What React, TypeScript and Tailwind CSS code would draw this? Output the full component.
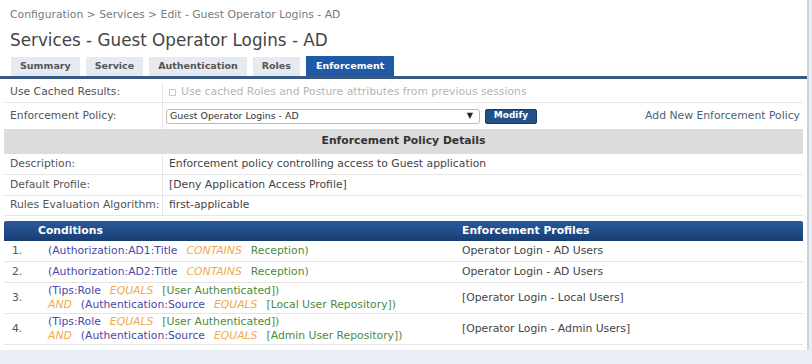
import React from "react";

const font = { fontFamily: '"DejaVu Sans", Verdana, sans-serif' };

const tabs = ["Summary", "Service", "Authentication", "Roles", "Enforcement"];

type Part = { t: string; k: "a" | "o" | "v" };

const A = (t: string): Part => ({ t, k: "a" });
const O = (t: string): Part => ({ t, k: "o" });
const V = (t: string): Part => ({ t, k: "v" });

const rules: { n: string; lines: Part[][]; profile: string }[] = [
  {
    n: "1.",
    lines: [[A("(Authorization:AD1:Title"), O("CONTAINS"), V("Reception)")]],
    profile: "Operator Login - AD Users",
  },
  {
    n: "2.",
    lines: [[A("(Authorization:AD2:Title"), O("CONTAINS"), V("Reception)")]],
    profile: "Operator Login - AD Users",
  },
  {
    n: "3.",
    lines: [
      [A("(Tips:Role"), O("EQUALS"), V("[User Authenticated])")],
      [O("AND"), A("(Authentication:Source"), O("EQUALS"), V("[Local User Repository])")],
    ],
    profile: "[Operator Login - Local Users]",
  },
  {
    n: "4.",
    lines: [
      [A("(Tips:Role"), O("EQUALS"), V("[User Authenticated])")],
      [O("AND"), A("(Authentication:Source"), O("EQUALS"), V("[Admin User Repository])")],
    ],
    profile: "[Operator Login - Admin Users]",
  },
];

function Token({ p }: { p: Part }) {
  if (p.k === "o") return <span className="italic text-[#f0a94a] mr-[9px]">{p.t}</span>;
  if (p.k === "v") return <span className="text-[#4c8a3c] mr-[9px]">{p.t}</span>;
  return <span className="text-[#4a47a8] mr-[9px]">{p.t}</span>;
}

function DetailRow({ label, children, h }: { label: string; children: React.ReactNode; h: string }) {
  return (
    <div className={`flex items-center border-b border-[#e6e6e6] ${h}`}>
      <div className="w-[159px] pl-[6px] text-[#555] border-r border-[#e6e6e6] h-full flex items-center whitespace-nowrap">
        {label}
      </div>
      <div className="pl-[6px] flex-1 flex items-center text-[#444]">{children}</div>
    </div>
  );
}

export default function App() {
  return (
    <div className="w-[812px] h-[364px] bg-[#e9eef4] overflow-hidden text-[10.8px]" style={font}>
      <div className="w-[809px] h-[350px] bg-white border-r-2 border-[#c9d3de] pt-[8px]">
        <div className="pl-[10px] text-[#7a7a7a] leading-[14px]">
          Configuration &gt; Services &gt; Edit - Guest Operator Logins - AD
        </div>
        <div className="pl-[10px] mt-[8px] text-[16.8px] text-[#444] leading-[20px]">
          Services - Guest Operator Logins - AD
        </div>

        <div className="flex items-end gap-[6px] pl-[11px] mt-[10px] h-[19px] border-b-[3px] border-[#3a5a86] text-[9.5px]">
          {tabs.map((t) =>
            t === "Enforcement" ? (
              <div key={t} className="h-[20px] px-[10px] flex items-center bg-[#1f5aa8] text-white font-bold">
                {t}
              </div>
            ) : (
              <div key={t} className="h-[19px] px-[9px] flex items-center bg-[#e6ebf1] text-[#555] font-bold">
                {t}
              </div>
            )
          )}
        </div>

        <div className="px-[4px] mt-[3px]">
          <DetailRow label="Use Cached Results:" h="h-[21px]">
            <span className="inline-block w-[7px] h-[7px] border border-[#ccc] mr-[5px]" />
            <span className="text-[#b5b5b5]">Use cached Roles and Posture attributes from previous sessions</span>
          </DetailRow>
          <div className="flex items-center h-[26px]">
            <div className="w-[159px] pl-[6px] text-[#555] border-r border-[#e6e6e6] h-full flex items-center">
              Enforcement Policy:
            </div>
            <div className="pl-[3px] flex items-center flex-1">
              <div className="w-[314px] h-[15px] border border-[#bbb] rounded-[3px] flex items-center justify-between pl-[3px] pr-[6px] text-[#333] text-[9.4px]">
                <span>Guest Operator Logins - AD</span>
                <span className="text-[8px] text-[#222]">▼</span>
              </div>
              <div className="ml-[5px] w-[52px] h-[15px] bg-[#244f87] border border-[#1a3a66] rounded-[2px] text-white font-bold flex items-center justify-center text-[9px]">
                Modify
              </div>
              <div className="ml-auto pr-[3px] text-[#4d5f7a]">Add New Enforcement Policy</div>
            </div>
          </div>
          <div className="h-[25px] bg-[#dcdcdc] flex items-center justify-center font-bold text-[#333]">
            Enforcement Policy Details
          </div>
          <DetailRow label="Description:" h="h-[21px]">
            Enforcement policy controlling access to Guest application
          </DetailRow>
          <DetailRow label="Default Profile:" h="h-[21px]">
            [Deny Application Access Profile]
          </DetailRow>
          <DetailRow label="Rules Evaluation Algorithm:" h="h-[20px]">
            first-applicable
          </DetailRow>

          <div className="mt-[5px] h-[20px] flex items-center text-white font-bold bg-gradient-to-b from-[#2a5a9a] to-[#173e74] rounded-t-[2px]">
            <div className="w-[458px] pl-[34px]">Conditions</div>
            <div>Enforcement Profiles</div>
          </div>
          {rules.map((r) => (
            <div
              key={r.n}
              className={`flex items-center border-b border-[#e4e4e4] ${r.lines.length > 1 ? "h-[31px]" : "h-[21px]"}`}
            >
              <div className="w-[44px] pl-[8px] text-[#555]">{r.n}</div>
              <div className="w-[414px] flex flex-col leading-[14px]">
                {r.lines.map((l, i) => (
                  <div key={i} className="whitespace-nowrap">
                    {l.map((p, j) => (
                      <Token key={j} p={p} />
                    ))}
                  </div>
                ))}
              </div>
              <div className="text-[#444]">{r.profile}</div>
            </div>
          ))}
        </div>
      </div>
    </div>
  );
}
